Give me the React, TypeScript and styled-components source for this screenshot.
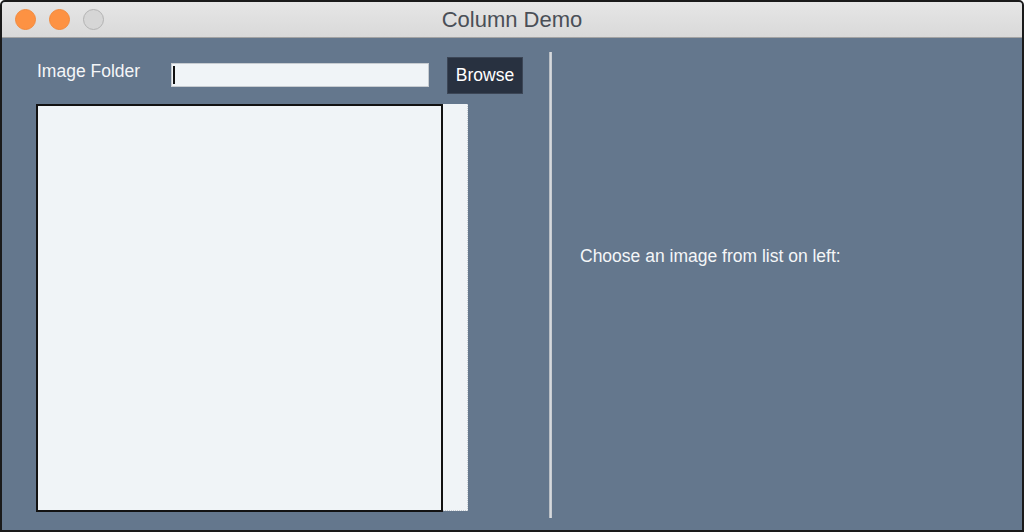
import React from 'react';
import styled, { createGlobalStyle } from 'styled-components';

const GlobalStyle = createGlobalStyle`
  html, body {
    margin: 0;
    padding: 0;
    background: #ffffff;
  }
  * {
    box-sizing: border-box;
  }
`;

const Window = styled.div`
  width: 1024px;
  height: 532px;
  display: flex;
  flex-direction: column;
  border: 2px solid #1a1a1a;
  border-radius: 5px 5px 0 0;
  overflow: hidden;
  background: #64778d;
  font-family: 'Liberation Sans', Arial, sans-serif;
`;

const TitleBar = styled.div`
  height: 36px;
  flex-shrink: 0;
  display: flex;
  align-items: center;
  position: relative;
  background: linear-gradient(#e6e6e6, #d9d9d9);
  border-bottom: 1px solid #a3a3a3;
`;

const Lights = styled.div`
  display: flex;
  gap: 13px;
  padding-left: 13px;
`;

const Light = styled.span<{ $off?: boolean }>`
  width: 21px;
  height: 21px;
  border-radius: 50%;
  background: ${(p) => (p.$off ? '#d6d6d6' : '#fd9243')};
  border: 1px solid ${(p) => (p.$off ? '#b3b3b3' : '#f28a3d')};
`;

const Title = styled.div`
  position: absolute;
  left: 0;
  right: 0;
  top: 0;
  bottom: 0;
  display: flex;
  align-items: center;
  justify-content: center;
  font-size: 22px;
  color: #4a4f57;
  pointer-events: none;
`;

const Body = styled.div`
  flex: 1;
  display: flex;
  padding: 0 0 0 34px;
`;

const LeftColumn = styled.div`
  display: flex;
  flex-direction: column;
  gap: 10px;
  padding-top: 19px;
  width: 489px;
`;

const FolderRow = styled.div`
  display: flex;
  align-items: flex-start;
  height: 37px;
`;

const Label = styled.span`
  width: 135px;
  margin-top: 4px;
  padding-left: 1px;
  font-size: 17.5px;
  color: #f4f6f8;
`;

const TextInput = styled.div`
  width: 258px;
  height: 24px;
  margin-top: 6px;
  background: #f0f4f7;
  border: 1px solid #c7ccd1;
  display: flex;
  align-items: center;
  padding-left: 1px;
`;

const Caret = styled.span`
  width: 2px;
  height: 18px;
  background: #111;
`;

const BrowseButton = styled.button`
  margin-left: 18px;
  width: 76px;
  height: 37px;
  background: #283140;
  border: 1px solid #3c4656;
  color: #ffffff;
  font-family: 'Liberation Sans', Arial, sans-serif;
  font-size: 17.5px;
  padding: 0;
`;

const ListArea = styled.div`
  display: flex;
  height: 408px;
`;

const ListBox = styled.div`
  width: 407px;
  height: 100%;
  background: #f0f4f7;
  border: 2px solid #121212;
`;

const ScrollBar = styled.div`
  width: 25px;
  height: 407px;
  background: #f0f4f7;
  border-right: 1px dotted #c5cad0;
  border-bottom: 1px dotted #c5cad0;
`;

const Separator = styled.div`
  width: 3px;
  margin: 14px 0 12px 24px;
  background: linear-gradient(90deg, #aab0b7, #dfe2e5 60%, #b8bdc3);
`;

const RightColumn = styled.div`
  flex: 1;
  display: flex;
  flex-direction: column;
  padding: 208px 0 0 28px;
`;

const Prompt = styled.span`
  font-size: 17.5px;
  color: #f4f6f8;
`;

export default function App() {
  return (
    <>
      <GlobalStyle />
      <Window>
        <TitleBar>
          <Lights>
            <Light />
            <Light />
            <Light $off />
          </Lights>
          <Title>Column Demo</Title>
        </TitleBar>
        <Body>
          <LeftColumn>
            <FolderRow>
              <Label>Image Folder</Label>
              <TextInput>
                <Caret />
              </TextInput>
              <BrowseButton>Browse</BrowseButton>
            </FolderRow>
            <ListArea>
              <ListBox />
              <ScrollBar />
            </ListArea>
          </LeftColumn>
          <Separator />
          <RightColumn>
            <Prompt>Choose an image from list on left:</Prompt>
          </RightColumn>
        </Body>
      </Window>
    </>
  );
}
